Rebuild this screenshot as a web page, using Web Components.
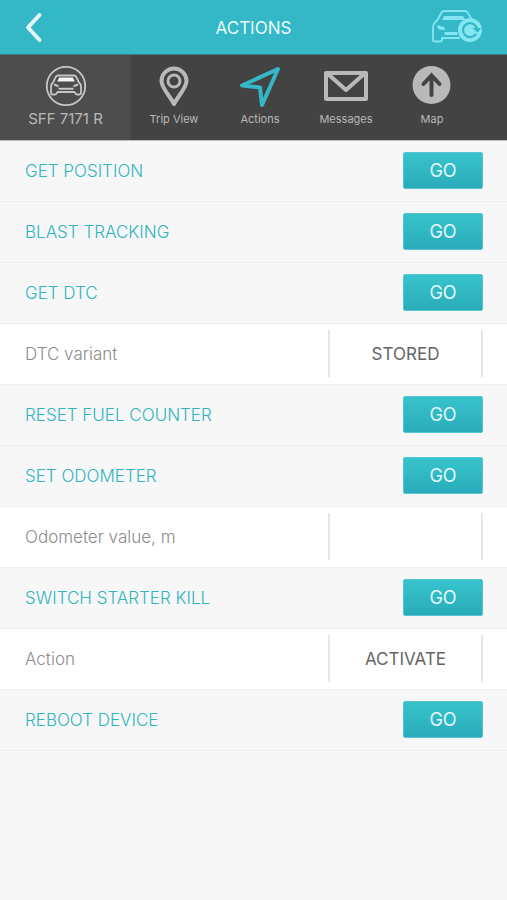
<!DOCTYPE html>
<html lang="en">
<head>
<meta charset="utf-8">
<meta name="viewport" content="width=device-width, initial-scale=1">
<title>Actions</title>
<style>
  html, body { margin: 0; min-height: 100%; }
  body {
    --teal: #34b8c8;
    --panel: #f7f7f7;
    background: var(--panel);
    font-family: Inter, "Liberation Sans", sans-serif;
    font-size: 17px;
    line-height: 24px;
  }
</style>
</head>
<body>
<actions-app></actions-app>
<script>
const define = (name, html, setup) => {
  const template = document.createElement('template');
  template.innerHTML = html;
  customElements.define(name, class extends HTMLElement {
    constructor() {
      super();
      this.attachShadow({ mode: 'open' }).append(template.content.cloneNode(true));
    }
    connectedCallback() { if (setup) setup(this, this.shadowRoot); }
  });
};

define('top-bar', `
  <style>
    :host { display: block; background: var(--teal); color: #e9fbfd; }
    header { display: grid; grid-template-columns: 1fr auto 1fr; align-items: center; height: 54px; padding: 0 24px; border-bottom: 1px solid #3d7f87; }
    h1 { margin: 0; font-size: 17px; font-weight: 400; line-height: 24px; padding-top: 2px; }
    button { border: 0; padding: 0; background: none; color: inherit; display: block; }
    button:last-child { justify-self: end; }
    svg { display: block; }
  </style>
  <header>
    <button aria-label="Back">
      <svg width="20" height="32" viewBox="0 0 20 32" fill="none" stroke="#e6f6f8" stroke-width="4" stroke-linecap="round" stroke-linejoin="round"><path d="M15.500 4L4 16.500L15.500 29"/></svg>
    </button>
    <h1><slot></slot></h1>
    <button aria-label="Refresh vehicle">
      <svg width="52" height="36" viewBox="0 0 52 36" fill="none" stroke="#84e6f1" stroke-width="1.800" stroke-linejoin="round" stroke-linecap="round">
        <path d="M28 29H11v2q0 1.500-1.500 1.500h-6q-1.500 0-1.500-1.500V18q0-2.500 2-4.500l2.500-2.500 4-7.500q1-1.500 3-1.500h20q2 0 3 1.500l4 6.500"/>
        <path d="M13 7h19l2.500 4H11z" fill="#84e6f1" stroke="none"/>
        <path d="M7 17l6 2v1l-5-.500z" fill="#84e6f1"/>
        <path d="M13.500 24.500h13" stroke-width="3" stroke-linecap="butt"/>
        <circle cx="39" cy="21" r="12" fill="#84e6f1" stroke="none"/>
        <path d="M44.500 25.500A7 7 0 1 1 45.500 18.500" stroke="#34b8c8" stroke-width="2.200"/>
        <path d="M41.500 19h9l-4 4.500z" fill="#34b8c8" stroke="none"/>
      </svg>
    </button>
  </header>
`);

define('nav-tab', `
  <style>
    :host { display: block; color: #b9b9b9; }
    a { display: flex; flex-direction: column; align-items: center; height: 85px; box-sizing: border-box; padding-top: 10px; gap: 4px; color: inherit; text-decoration: none; font-size: 11px; line-height: 16px; white-space: nowrap; }
    ::slotted(svg) { display: block; height: 42px; }
    :host([vehicle]) { background: #4d4d4d; }
    :host([vehicle]) a { font-size: 15px; }
  </style>
  <a href="#"><slot name="icon"></slot><span><slot></slot></span></a>
`);

define('nav-bar', `
  <style>
    :host { display: block; background: #434343; }
    nav { display: grid; grid-template-columns: 131fr repeat(4, 86fr) 32fr; border-bottom: 1px solid #bcbcbc; }
  </style>
  <nav><slot></slot></nav>
`);

define('go-button', `
  <style>
    :host { display: block; }
    button { display: block; width: 80px; height: 37px; padding: 1px 0 0; border: 1px solid #54c6d1; border-radius: 2px; background: linear-gradient(#37c3cc, #2aacba); color: #e3f9fb; font: inherit; font-size: 18px; }
  </style>
  <button><slot></slot></button>
`);

define('action-row', `
  <style>
    :host { display: flex; align-items: center; justify-content: space-between; box-sizing: border-box; height: 61px; padding: 0 24px 2px 25px; border-bottom: 1px solid #eee; background: var(--panel); }
    h2 { margin: 0; font-size: 17px; font-weight: 300; line-height: 24px; padding-top: 2px; color: #30b4bf; }
  </style>
  <h2><slot></slot></h2><go-button>GO</go-button>
`);

define('param-row', `
  <style>
    :host { display: flex; align-items: center; justify-content: space-between; box-sizing: border-box; height: 61px; padding: 0 24px 1px 25px; border-bottom: 1px solid #f0f0f0; background: #fff; }
    label { color: #8c8c8c; font-size: 17px; font-weight: 300; }
    select, input { appearance: none; box-sizing: border-box; width: 155px; height: 47px; margin: 0; padding: 0; border: solid #e6e6e6; border-width: 0 2px; border-radius: 0; background: none; color: #656565; font: inherit; text-align: center; text-align-last: center; outline: 0; }
  </style>
  <label for="field"></label>
`, (host, root) => {
  const value = host.getAttribute('value');
  root.querySelector('label').textContent = host.getAttribute('label');
  const field = document.createElement(value ? 'select' : 'input');
  field.id = 'field';
  if (value) field.add(new Option(value));
  root.append(field);
});

define('actions-app', `
  <style>:host, main { display: block; }</style>
  <top-bar>ACTIONS</top-bar>
  <nav-bar>
    <nav-tab vehicle>
      <svg slot="icon" width="42" height="42" viewBox="0 0 42 42" fill="none" stroke="#c6c6c6" stroke-width="1.800" stroke-linejoin="round">
        <circle cx="21" cy="21" r="19.200"/>
        <path d="M13 10.500h16q1.500 0 2.200 1.300L34 17.500q2 1.500 2 4V28q0 1.500-1.500 1.500h-2.300q-1.300 0-1.800-1.200L29.500 27h-17l-.900 1.300q-.500 1.200-1.800 1.200H7.500Q6 29.500 6 28v-6.500q0-2.500 2-4l2.800-5.700Q11.500 10.500 13 10.500z"/>
        <path d="M14.200 12.500h13.600l2 4H12.200z" fill="#f4f4f4" stroke="none"/>
        <path d="M9 19.500l4.500 1.700M33 19.500l-4.500 1.700M13.500 23.700h15" stroke-width="2"/>
      </svg>SFF 7171 R</nav-tab>
    <nav-tab>
      <svg slot="icon" width="42" height="42" viewBox="0 0 42 42" fill="none" stroke="#b9b9b9" stroke-width="4" stroke-linejoin="round">
        <path d="M21 39C17 31 8.500 23 8.500 16a12.500 12.500 0 0 1 25 0C33.500 23 25 31 21 39z"/><circle cx="21" cy="16" r="6" stroke-width="3"/>
      </svg>Trip View</nav-tab>
    <nav-tab>
      <svg slot="icon" width="42" height="42" viewBox="0 0 42 42" fill="none" stroke="#34b8c8" stroke-width="4" stroke-linejoin="round">
        <path d="M39 4L3 20.500l18 2 2 17.500z"/>
      </svg>Actions</nav-tab>
    <nav-tab>
      <svg slot="icon" width="46" height="42" viewBox="0 0 46 42" fill="none" stroke="#b9b9b9" stroke-width="4" stroke-linejoin="round">
        <path d="M3 8h40v26H3z"/><path d="M5 9l18 16 18-16"/>
      </svg>Messages</nav-tab>
    <nav-tab>
      <svg slot="icon" width="42" height="42" viewBox="0 0 42 42" fill="none" stroke="#434343" stroke-width="4" stroke-linecap="round">
        <circle cx="20.500" cy="20" r="19" fill="#b9b9b9" stroke="none"/><path d="M20.500 30V11M12.500 19l8-8.500 8 8.500"/>
      </svg>Map</nav-tab>
  </nav-bar>
  <main>
    <action-row>GET POSITION</action-row>
    <action-row>BLAST TRACKING</action-row>
    <action-row>GET DTC</action-row>
    <param-row label="DTC variant" value="STORED"></param-row>
    <action-row>RESET FUEL COUNTER</action-row>
    <action-row>SET ODOMETER</action-row>
    <param-row label="Odometer value, m"></param-row>
    <action-row>SWITCH STARTER KILL</action-row>
    <param-row label="Action" value="ACTIVATE"></param-row>
    <action-row>REBOOT DEVICE</action-row>
  </main>
`);
</script>
</body>
</html>
